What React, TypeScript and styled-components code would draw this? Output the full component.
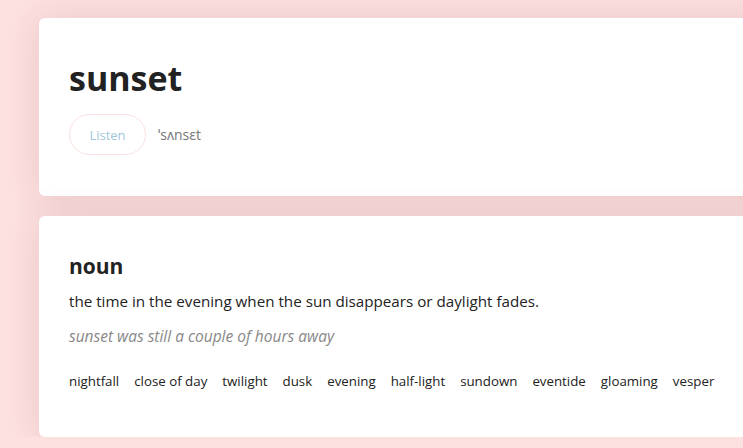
import styled, { createGlobalStyle } from "styled-components";

const GlobalStyle = createGlobalStyle`
    html, body {
        margin: 0;
        padding: 0;
        background: #fde0e0;
        overflow: hidden;
    }
    body {
        font-family: "Open Sans", "Noto Sans", sans-serif;
        color: #222;
    }
`;

const Page = styled.main`
    display: flex;
    flex-direction: column;
    gap: 20px;
    padding: 18px 0 0 39px;
    width: 860px;
`;

const Card = styled.section<{ $padding: string }>`
    background: #fff;
    border-radius: 6px;
    box-shadow: 0 2px 36px rgba(110, 50, 50, 0.14);
    padding: ${(p) => p.$padding};
`;

const Word = styled.h1`
    margin: 0;
    font-size: 34px;
    font-weight: 700;
    line-height: 48px;
    color: #222;
`;

const Pronunciation = styled.div`
    display: flex;
    align-items: center;
    gap: 12px;
    margin-top: 12px;
`;

const ListenButton = styled.button`
    width: 77px;
    height: 41px;
    border: 1px solid #fde0e0;
    border-radius: 21px;
    background: #fff;
    color: #9fc7dc;
    font-family: inherit;
    font-size: 13px;
    cursor: pointer;
`;

const Phonetic = styled.span`
    font-size: 14px;
    color: #777;
`;

const PartOfSpeech = styled.h2`
    margin: 0;
    font-size: 21px;
    font-weight: 700;
    line-height: 28px;
    color: #222;
`;

const Definition = styled.p`
    margin: 10px 0 0;
    font-size: 15.2px;
    line-height: 22px;
    color: #222;
`;

const Example = styled.p`
    margin: 13px 0 0;
    font-size: 15.5px;
    line-height: 22px;
    font-style: italic;
    color: #888;
`;

const Synonyms = styled.ul`
    display: flex;
    gap: 15px;
    list-style: none;
    margin: 25px 0 0;
    padding: 0;
`;

const Synonym = styled.li`
    font-size: 13.3px;
    line-height: 18px;
    color: #222;
`;

const synonyms = [
    "nightfall",
    "close of day",
    "twilight",
    "dusk",
    "evening",
    "half-light",
    "sundown",
    "eventide",
    "gloaming",
    "vesper",
];

function App() {
    return (
        <>
            <GlobalStyle />
            <Page>
                <Card $padding="36px 30px 41px">
                    <Word>sunset</Word>
                    <Pronunciation>
                        <ListenButton>Listen</ListenButton>
                        <Phonetic>ˈsʌnsɛt</Phonetic>
                    </Pronunciation>
                </Card>
                <Card $padding="36px 30px 47px">
                    <PartOfSpeech>noun</PartOfSpeech>
                    <Definition>the time in the evening when the sun disappears or daylight fades.</Definition>
                    <Example>sunset was still a couple of hours away</Example>
                    <Synonyms>
                        {synonyms.map((s) => (
                            <Synonym key={s}>{s}</Synonym>
                        ))}
                    </Synonyms>
                </Card>
            </Page>
        </>
    );
}

export default App;
